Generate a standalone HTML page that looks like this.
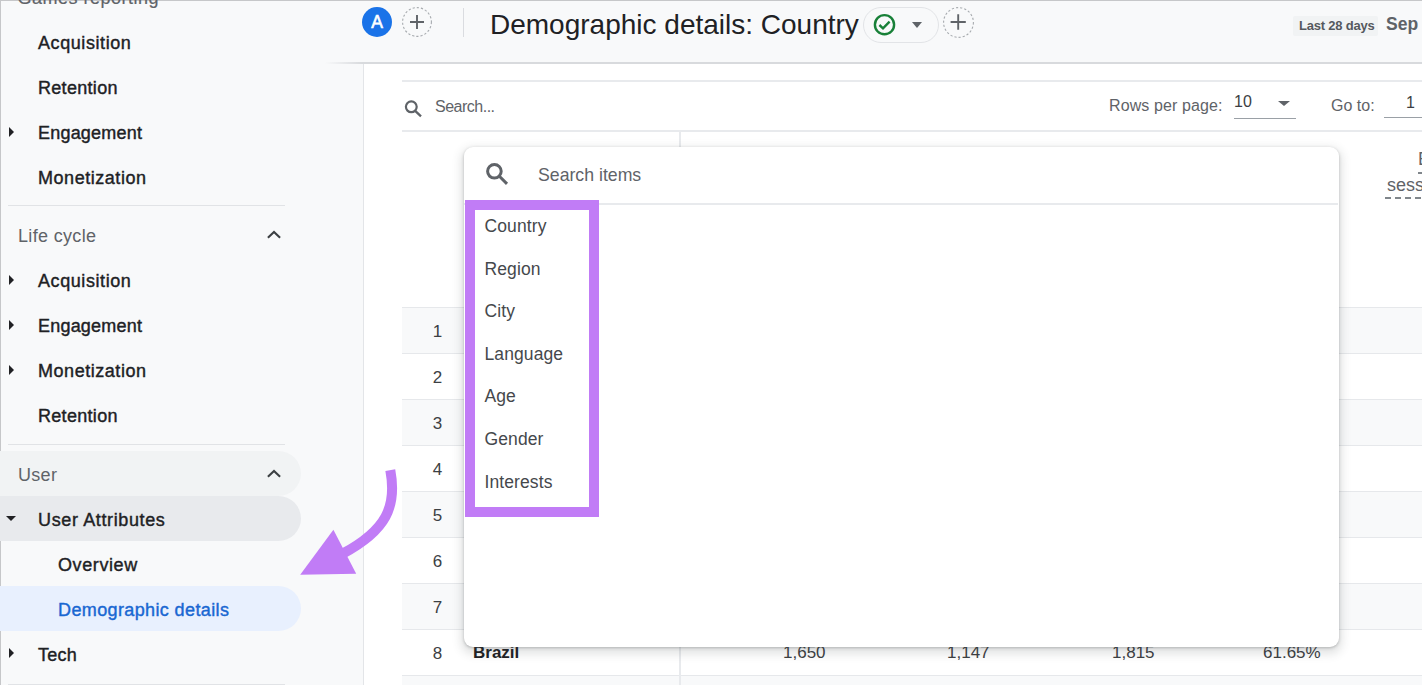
<!DOCTYPE html>
<html><head><meta charset="utf-8">
<style>
*{box-sizing:border-box;margin:0;padding:0}
html,body{width:1422px;height:685px;overflow:hidden;background:#fff;font-family:"Liberation Sans",sans-serif}
.a{position:absolute}
.t{position:absolute;white-space:nowrap;line-height:1}
#side{position:absolute;left:0;top:0;width:364px;height:685px;background:#f8f9fa;border-right:1.5px solid #e3e5e8}
#bl{position:absolute;left:0;top:0;width:1px;height:685px;background:#c6c7c9}
#bt{position:absolute;left:0;top:0;width:1422px;height:1px;background:#c6c7c9}
#hdr{position:absolute;left:0;top:0;width:1422px;height:63px;background:#f8f9fa}
#hdrline{position:absolute;left:325px;top:62.3px;width:1097px;height:1.8px;background:linear-gradient(to right,rgba(214,216,219,0),#d8dadd 37px)}
.nav{font-size:18px;color:#202124;letter-spacing:0.45px;-webkit-text-stroke:0.4px #202124}
.grp{font-size:18px;color:#5f6368;letter-spacing:0.3px}
.div{position:absolute;left:8px;width:277px;height:1px;background:#e1e3e6}
.car{position:absolute;width:0;height:0;border-top:5px solid transparent;border-bottom:5px solid transparent;border-left:5.5px solid #202124}
.pill{position:absolute;left:0;width:301px;height:45px;border-radius:0 23px 23px 0}
.row{position:absolute;left:402px;width:1020px;height:46px;border-top:1.4px solid #e6e8eb}
.g{background:#f8f9fa}
.num{font-size:17px;color:#3c4043;width:20px;text-align:center}
.item{font-size:17.5px;color:#45484c;letter-spacing:0.1px}
.hl{position:absolute;background:#e8eaed;height:1.5px}
</style></head><body>
<div id="side"></div>
<div id="hdr"></div>
<div id="hdrline"></div>
<div id="bt"></div>
<div id="bl"></div>

<!-- sidebar -->
<div class="t grp" style="left:17.5px;top:-11.2px;letter-spacing:0.5px;-webkit-text-stroke:0.2px #5f6368">Games reporting</div>
<div class="t nav" style="left:38px;top:34.0px;letter-spacing:0.58px">Acquisition</div>
<div class="t nav" style="left:38px;top:79.1px;letter-spacing:0.3px">Retention</div>
<div class="car" style="left:9px;top:127px"></div>
<div class="t nav" style="left:38px;top:123.8px;letter-spacing:0.2px">Engagement</div>
<div class="t nav" style="left:38px;top:169.0px;letter-spacing:0.54px">Monetization</div>
<div class="div" style="top:205px"></div>
<div class="t grp" style="left:18px;top:226.8px;letter-spacing:0.33px">Life cycle</div>
<svg class="a" style="left:266px;top:229px" width="16" height="11" viewBox="0 0 16 11"><path d="M1.9 8.8 L8 2.9 L14.1 8.8" fill="none" stroke="#3c4043" stroke-width="2.1"/></svg>

<div class="car" style="left:9px;top:275px"></div>
<div class="t nav" style="left:38px;top:272.0px;letter-spacing:0.58px">Acquisition</div>
<div class="car" style="left:9px;top:320px"></div>
<div class="t nav" style="left:38px;top:317.0px;letter-spacing:0.2px">Engagement</div>
<div class="car" style="left:9px;top:365px"></div>
<div class="t nav" style="left:38px;top:362.0px;letter-spacing:0.54px">Monetization</div>
<div class="t nav" style="left:38px;top:407.0px;letter-spacing:0.3px">Retention</div>
<div class="div" style="top:444px"></div>

<div class="pill" style="top:451.4px;background:#f1f3f4"></div>
<div class="pill" style="top:496.2px;background:#e8eaed"></div>
<div class="pill" style="top:586.4px;background:#e8f0fe"></div>
<div class="t grp" style="left:18px;top:466.3px">User</div>
<svg class="a" style="left:266px;top:468px" width="16" height="11" viewBox="0 0 16 11"><path d="M1.9 8.8 L8 2.9 L14.1 8.8" fill="none" stroke="#3c4043" stroke-width="2.1"/></svg>
<div class="a" style="left:6.3px;top:516px;width:0;height:0;border-left:5px solid transparent;border-right:5px solid transparent;border-top:5.2px solid #202124"></div>
<div class="t nav" style="left:38px;top:511.3px;letter-spacing:0.63px">User Attributes</div>
<div class="t nav" style="left:58px;top:556.2px;letter-spacing:0.6px">Overview</div>
<div class="t nav" style="left:58px;top:601.3px;color:#1967d2;-webkit-text-stroke-color:#1967d2;letter-spacing:0.38px">Demographic details</div>
<div class="car" style="left:9px;top:648px"></div>
<div class="t nav" style="left:38px;top:646.3px;letter-spacing:0.25px">Tech</div>
<div class="div" style="top:684px"></div>

<!-- header -->
<div class="a" style="left:362px;top:7px;width:30px;height:30px;border-radius:50%;background:#1a73e8"></div>
<div class="t" style="left:362px;top:14px;width:30px;text-align:center;font-size:17.5px;color:#fff;-webkit-text-stroke:0.6px #fff">A</div>
<svg class="a" style="left:402px;top:7px" width="30" height="30" viewBox="0 0 30 30"><circle cx="15" cy="15" r="14.4" fill="none" stroke="#a6aaae" stroke-width="1.1" stroke-dasharray="2.2 2"/><path d="M15 8 V22 M8 15 H22" stroke="#5f6368" stroke-width="1.9"/></svg>
<div class="a" style="left:462.5px;top:8px;width:1px;height:29px;background:#dadce0"></div>
<div class="t" style="left:490px;top:10.8px;font-size:28px;color:#202124">Demographic details: Country</div>
<div class="a" style="left:862.8px;top:7px;width:76px;height:35.5px;border-radius:18px;border:1.6px solid #e2e4e7"></div>
<svg class="a" style="left:872px;top:12px" width="26" height="26" viewBox="0 0 26 26"><circle cx="12.5" cy="12.7" r="9.6" fill="none" stroke="#188038" stroke-width="2.4"/><path d="M7.4 13 L11 16.3 L17.6 9.7" fill="none" stroke="#188038" stroke-width="2.4"/></svg>
<div class="a" style="left:912px;top:22px;width:0;height:0;border-left:5.5px solid transparent;border-right:5.5px solid transparent;border-top:6px solid #5f6368"></div>
<svg class="a" style="left:943px;top:7px" width="31" height="31" viewBox="0 0 31 31"><circle cx="15.5" cy="15.5" r="14.9" fill="none" stroke="#a6aaae" stroke-width="1.1" stroke-dasharray="2.2 2"/><path d="M15.2 7.2 V22.8 M7.6 15 H22.8" stroke="#5f6368" stroke-width="1.9"/></svg>

<div class="a" style="left:1293px;top:15.5px;width:85px;height:20px;background:#f1f3f4;border-radius:2px"></div>
<div class="t" style="left:1299px;top:18.5px;font-size:13px;font-weight:bold;color:#55595e;letter-spacing:-0.2px">Last 28 days</div>
<div class="t" style="left:1386px;top:16.3px;font-size:17.5px;font-weight:bold;color:#5f6368">Sep</div>

<!-- table -->
<div class="hl" style="left:402px;top:80.2px;width:1020px"></div>
<svg class="a" style="left:402px;top:98px" width="22" height="22" viewBox="0 0 22 22"><circle cx="9.3" cy="8.8" r="5.4" fill="none" stroke="#5f6368" stroke-width="2.2"/><path d="M13.2 12.8 L19 18.4" stroke="#5f6368" stroke-width="2.3"/></svg>
<div class="t" style="left:435px;top:99.4px;font-size:16px;color:#5f6368;letter-spacing:-0.5px">Search...</div>
<div class="t" style="left:1109px;top:98.4px;font-size:16px;color:#5f6368;letter-spacing:0.1px">Rows per page:</div>
<div class="t" style="left:1234px;top:94.3px;font-size:16px;color:#3c4043">10</div>
<div class="a" style="left:1278px;top:100.5px;width:0;height:0;border-left:6px solid transparent;border-right:6px solid transparent;border-top:5.5px solid #5f6368"></div>
<div class="a" style="left:1234px;top:118px;width:62px;height:1px;background:#9aa0a6"></div>
<div class="t" style="left:1331px;top:98.4px;font-size:16px;color:#5f6368">Go to:</div>
<div class="t" style="left:1406px;top:94.6px;font-size:16px;color:#3c4043">1</div>
<div class="a" style="left:1384px;top:116.5px;width:38px;height:1px;background:#9aa0a6"></div>
<div class="hl" style="left:402px;top:130px;width:1020px"></div>
<div class="t" style="left:1418px;top:150px;font-size:18px;color:#5f6368">E</div>
<div class="a" style="left:1418px;top:172px;width:4px;height:2px;background:#80868b"></div>
<div class="t" style="left:1387px;top:175.7px;font-size:18px;color:#5f6368">sess</div>
<div class="a" style="left:1385px;top:196.5px;width:37px;height:2px;background:repeating-linear-gradient(to right,#80868b 0 6px,transparent 6px 10px)"></div>

<div class="row g" style="top:306.6px"></div>
<div class="row" style="top:352.6px"></div>
<div class="row g" style="top:398.6px"></div>
<div class="row" style="top:444.6px"></div>
<div class="row g" style="top:490.6px"></div>
<div class="row" style="top:536.6px"></div>
<div class="row g" style="top:582.6px"></div>
<div class="row" style="top:628.6px"></div>
<div class="row g" style="top:674.6px"></div>
<div class="a" style="left:679.3px;top:131px;width:1.5px;height:554px;background:#e8eaed"></div>

<div class="t num" style="left:427.5px;top:323.0px">1</div>
<div class="t num" style="left:427.5px;top:369.0px">2</div>
<div class="t num" style="left:427.5px;top:415.0px">3</div>
<div class="t num" style="left:427.5px;top:461.0px">4</div>
<div class="t num" style="left:427.5px;top:507.0px">5</div>
<div class="t num" style="left:427.5px;top:553.0px">6</div>
<div class="t num" style="left:427.5px;top:599.0px">7</div>
<div class="t num" style="left:427.5px;top:645.0px">8</div>
<div class="t" style="left:473px;top:644px;font-size:17px;font-weight:bold;color:#202124">Brazil</div>
<div class="t" style="left:783px;top:644px;font-size:17px;color:#3c4043">1,650</div>
<div class="t" style="left:947px;top:644px;font-size:17px;color:#3c4043">1,147</div>
<div class="t" style="left:1112px;top:644px;font-size:17px;color:#3c4043">1,815</div>
<div class="t" style="left:1263px;top:644px;font-size:17px;color:#3c4043">61.65%</div>

<!-- popup -->
<div class="a" style="left:463.5px;top:146.7px;width:875px;height:500.3px;background:#fff;border-radius:9px;box-shadow:0 4px 10px 3px rgba(60,64,67,.15),0 1px 3px rgba(60,64,67,.3)"></div>
<svg class="a" style="left:484px;top:161px" width="26" height="26" viewBox="0 0 26 26"><circle cx="10.4" cy="10.3" r="6.8" fill="none" stroke="#5f6368" stroke-width="3"/><path d="M15.4 15.3 L23 22.9" stroke="#5f6368" stroke-width="3"/></svg>
<div class="t" style="left:538px;top:167.2px;font-size:17.7px;color:#5f6368">Search items</div>
<div class="hl" style="left:464px;top:203px;width:874px"></div>
<div class="t item" style="left:484.5px;top:217.9px">Country</div>
<div class="t item" style="left:484.5px;top:260.5px">Region</div>
<div class="t item" style="left:484.5px;top:303.1px">City</div>
<div class="t item" style="left:484.5px;top:345.7px">Language</div>
<div class="t item" style="left:484.5px;top:388.3px">Age</div>
<div class="t item" style="left:484.5px;top:430.9px">Gender</div>
<div class="t item" style="left:484.5px;top:473.8px">Interests</div>
<div class="a" style="left:465px;top:200px;width:134px;height:317px;border:10px solid #c17cf6"></div>

<!-- arrow -->
<svg class="a" style="left:0;top:0" width="1422" height="685" viewBox="0 0 1422 685">
<path d="M390.3 470.2 C397 506, 387 530, 342 554" fill="none" stroke="#c17cf6" stroke-width="10"/>
<path d="M333.4 529.7 L300.2 574.7 L356.2 573.8 Z" fill="#c17cf6"/>
</svg>
</body></html>
